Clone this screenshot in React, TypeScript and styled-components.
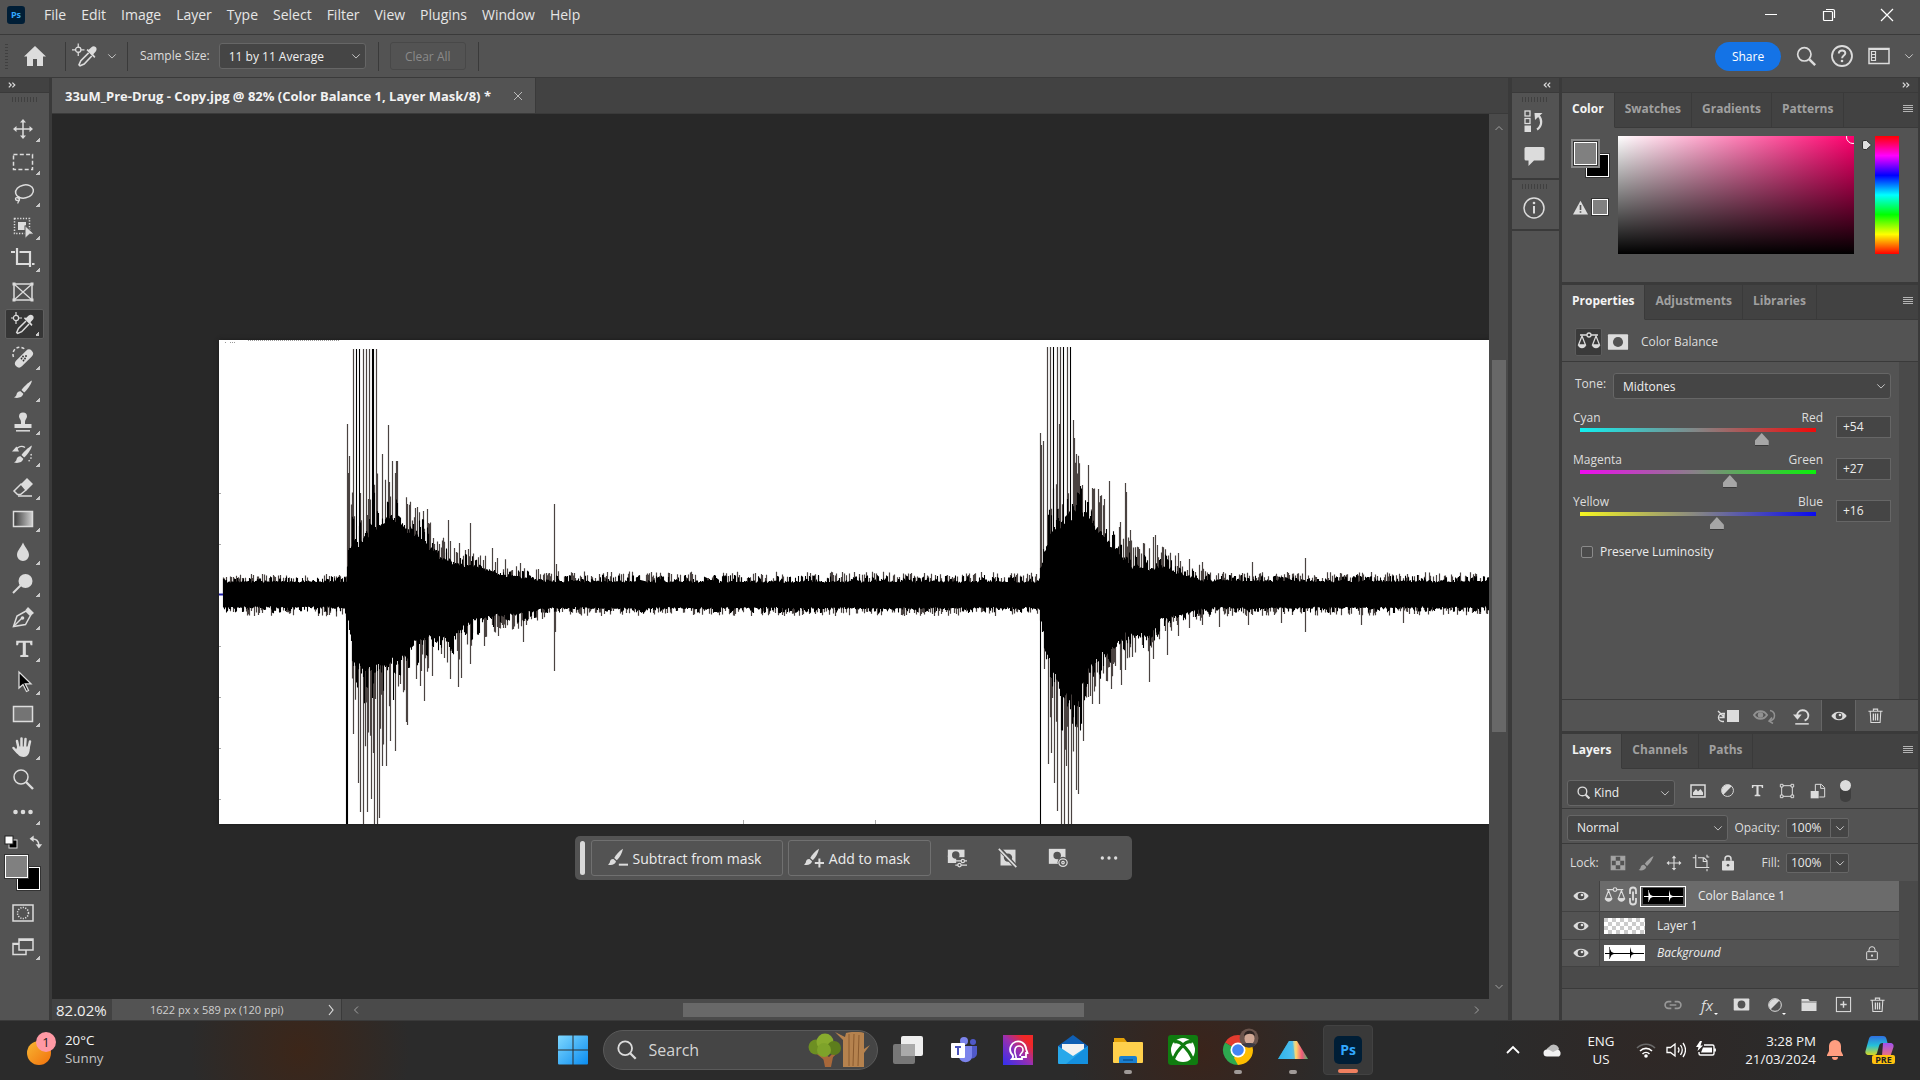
import React from 'react';
import styled, { createGlobalStyle, css } from 'styled-components';

const c = {
  bar: '#535353',
  line: '#3a3a3a',
  tabBar: '#424242',
  field: '#454545',
  fieldLine: '#666666',
  canvas: '#282828',
  icon: '#dcdcdc',
  text: '#dddddd',
  dim: '#a0a0a0',
};

const Global = createGlobalStyle`
  *, *::before, *::after { box-sizing: border-box; }
  body { margin: 0; background: ${c.canvas}; }
  body, button, input, select { font-family: "Open Sans", "Noto Sans", sans-serif; }
  button { background: none; border: 0; padding: 0; margin: 0; color: inherit; display: flex; align-items: center; justify-content: center; flex: none; }
  h1, h2, p, ul { margin: 0; padding: 0; font-weight: inherit; font-size: inherit; }
  ul { list-style: none; }
  svg { display: block; flex: none; }
`;

/* ---------- frame ---------- */

const Frame = styled.div`
  min-height: 100vh;
  display: flex;
  flex-direction: column;
  background: ${c.bar};
  color: ${c.text};
  font-size: 12px;
  line-height: 18px;
`;

const TitleBar = styled.header`
  display: flex;
  align-items: center;
  height: 35px;
  padding: 0 25px 5px 7px;
  border-bottom: 1px solid ${c.line};
`;

const Menu = styled.nav`
  display: flex;
  flex: 1;
  gap: 15px;
  margin-left: 19px;
`;

const MenuButton = styled.button`
  font-size: 14px;
  line-height: 20px;
  color: #e6e6e6;
`;

const WindowButton = styled.button`
  width: 16px;
  height: 20px;
  margin-left: 42px;
`;

const OptionsBar = styled.div`
  display: flex;
  align-items: center;
  height: 43px;
  padding: 0 6px 0 5px;
  border-bottom: 1px solid ${c.line};
`;

const Grip = styled.span<{ $wide?: boolean }>`
  display: block;
  ${(p) =>
    p.$wide
      ? css`
          width: 25px;
          height: 5px;
          background: repeating-linear-gradient(90deg, #404040 0 1px, transparent 1px 3px);
        `
      : css`
          width: 3px;
          height: 25px;
          background: repeating-linear-gradient(#404040 0 1px, transparent 1px 3px);
        `}
`;

const Divider = styled.span<{ $before: number; $after: number }>`
  width: 1px;
  height: 29px;
  background: ${c.line};
  margin: 0 ${(p) => p.$after}px 0 ${(p) => p.$before}px;
`;

const HomeButton = styled.button`
  width: 24px;
  height: 24px;
  margin-left: 15px;
`;

const ToolPreset = styled.button`
  gap: 9px;
`;

const SelectBox = styled.span<{ $width?: number; $grow?: boolean; $pad?: number }>`
  display: grid;
  align-items: center;
  height: 26px;
  ${(p) => (p.$grow ? 'flex: 1;' : `width: ${p.$width}px;`)}
  background: ${c.field};
  border: 1px solid ${c.fieldLine};
  border-radius: 3px;
  > * { grid-area: 1 / 1; }
  > svg { justify-self: end; margin-right: 4px; pointer-events: none; }
  > svg.lead { justify-self: start; margin-left: 9px; }
  select {
    appearance: none;
    width: 100%;
    height: 100%;
    padding: 0 18px 0 ${(p) => p.$pad ?? 9}px;
    border: 0;
    outline: 0;
    background: none;
    color: #f0f0f0;
    font-size: 12px;
  }
`;

const OptionLabel = styled.label`
  margin-right: 9px;
`;

const ClearAll = styled.button`
  width: 76px;
  height: 28px;
  border: 1px solid #484848;
  border-radius: 3px;
  color: #8a8a8a;
  font-size: 12px;
`;

const Spacer = styled.span`
  flex: 1;
`;

const Share = styled.button`
  width: 66px;
  height: 29px;
  border-radius: 15px;
  background: #1473e6;
  color: #fff;
  font-size: 12px;
`;

const TopActions = styled.div`
  display: flex;
  align-items: center;
  margin-left: 15px;
  gap: 14px;
`;

const Workspace = styled.div`
  flex: 1;
  display: flex;
  min-height: 0;
`;

/* ---------- tool column ---------- */

const Collapse = styled.div<{ $right?: boolean }>`
  display: flex;
  align-items: center;
  height: 15px;
  justify-content: ${(p) => (p.$right ? 'flex-end' : 'flex-start')};
  padding: 0 8px;
  background: ${c.tabBar};
  border-bottom: 1px solid ${c.line};
`;

const ToolColumn = styled.aside`
  width: 52px;
  border-right: 3px solid ${c.line};
  display: flex;
  flex-direction: column;
`;

const GripRow = styled.div<{ $height: number }>`
  height: ${(p) => p.$height}px;
  padding-top: 4px;
  display: flex;
  justify-content: center;
`;

const ToolList = styled.div`
  display: grid;
  grid-template-rows: repeat(11, 32px 33px);
  padding-left: 5px;
  align-items: center;
`;

const Tool = styled.button<{ $active?: boolean; $more?: boolean }>`
  width: 39px;
  height: 30px;
  padding-right: 3px;
  border-radius: 2px;
  ${(p) => p.$active && 'background: #363636; border: 1px solid #5f5f5f;'}
  ${(p) =>
    p.$more &&
    css`
      background-image: linear-gradient(135deg, transparent 50%, #c8c8c8 50%);
      background-size: 4px 4px;
      background-position: right 4px bottom 2px;
      background-repeat: no-repeat;
    `}
`;

const ColorChips = styled.div`
  padding: 2px 4px 0;
`;

const ChipTools = styled.div`
  display: flex;
  justify-content: space-between;
  padding-right: 2px;
  height: 24px;
  align-items: center;
`;

const Swatches = styled.div`
  position: relative;
  height: 36px;
  width: 36px;
`;

const Swatch = styled.button<{ $fg?: boolean; $ring?: boolean }>`
  position: absolute;
  width: 23px;
  height: 23px;
  border: 1px solid #fff;
  background: #000;
  right: 0;
  bottom: 0;
  box-shadow: 0 0 0 1px #333;
  ${(p) =>
    p.$fg &&
    css`
      left: 1px;
      top: 1px;
      background: #808080;
      box-shadow: 0 0 0 1px #333${p.$ring ? ', 0 0 0 3px #888' : ''};
    `}
`;

const ModeList = styled.div`
  display: flex;
  flex-direction: column;
  gap: 4px;
  padding: 8px 0 0 5px;
`;

/* ---------- document ---------- */

const Document = styled.main`
  flex: 1;
  min-width: 0;
  display: flex;
  flex-direction: column;
  background: ${c.canvas};
`;

const DocTabs = styled.div`
  display: flex;
  height: 36px;
  background: ${c.tabBar};
  border-bottom: 1px solid ${c.line};
`;

const DocTab = styled.div`
  display: flex;
  align-items: center;
  gap: 23px;
  padding: 0 13px 0 13px;
  background: ${c.bar};
  border-right: 1px solid ${c.line};
  font-size: 13px;
  font-weight: 700;
  color: #f2f2f2;
  white-space: nowrap;
`;

const DocBody = styled.div`
  flex: 1;
  display: grid;
  grid-template-columns: minmax(0, 1fr) 19px;
  grid-template-rows: minmax(0, 1fr) 21px;
  min-height: 0;
`;

const Stage = styled.section`
  position: relative;
  padding: 226px 0 40px 167px;
  overflow: hidden;
`;

const Artboard = styled.div`
  background: #fff;
  overflow: hidden;
  height: 484px;
  box-shadow: 0 0 4px #1a1a1a;
`;

const TaskBarFloat = styled.div`
  position: absolute;
  left: 523px;
  bottom: 119px;
  display: flex;
  align-items: center;
  height: 44px;
  width: 557px;
  padding: 0 5px;
  border-radius: 5px;
  background: ${c.bar};
`;

const Handle = styled.span`
  width: 5px;
  height: 34px;
  border-radius: 3px;
  background: #d8d8d8;
  margin-right: 6px;
`;

const MaskButton = styled.button<{ $width: number }>`
  width: ${(p) => p.$width}px;
  height: 36px;
  margin-right: 5px;
  padding-right: 5px;
  gap: 5px;
  border: 1px solid #707070;
  border-radius: 3px;
  color: #ececec;
  font-size: 14px;
`;

const MaskIcons = styled.div`
  flex: 1;
  display: flex;
  justify-content: space-between;
  padding: 0 8px 0 11px;
`;

const VScroll = styled.div`
  grid-row: 1 / 3;
  grid-column: 2;
  background: #4a4a4a;
  display: flex;
  flex-direction: column;
  align-items: center;
  padding: 10px 0 29px;
`;

const VThumb = styled.span`
  width: 14px;
  height: 372px;
  margin-top: 228px;
  margin-bottom: auto;
  background: #686868;
`;

const StatusBar = styled.div`
  display: flex;
  align-items: center;
  background: #4a4a4a;
  color: #d0d0d0;
`;

const Zoom = styled.input`
  width: 60px;
  height: 21px;
  padding: 0 4px;
  border: 0;
  background: ${c.tabBar};
  color: #f0f0f0;
  font-size: 15px;
`;

const DocInfo = styled.button`
  width: 230px;
  height: 21px;
  padding: 0 7px 0 38px;
  justify-content: space-between;
  background: ${c.bar};
  border-right: 1px solid ${c.line};
  font-size: 11px;
`;

const HTrack = styled.div`
  flex: 1;
  display: flex;
  align-items: center;
  padding: 0 8px 0 10px;
`;

const HThumb = styled.span`
  width: 401px;
  height: 14px;
  margin-left: 323px;
  margin-right: auto;
  background: #686868;
`;

/* ---------- dock ---------- */

const Strip = styled.aside`
  width: 53px;
  border-left: 4px solid ${c.line};
  border-right: 2px solid ${c.line};
`;

const StripGroup = styled.div`
  display: flex;
  flex-direction: column;
  align-items: center;
  padding-right: 3px;
  border-bottom: 2px solid ${c.line};
`;

const StripButton = styled.button`
  width: 40px;
  height: 35px;
`;

const StripGap = styled.div<{ $h: number }>`
  height: ${(p) => p.$h}px;
`;

const Dock = styled.aside`
  width: 359px;
  display: flex;
  flex-direction: column;
  border-left: 1px solid ${c.line};
  border-right: 2px solid ${c.line};
`;

const Panel = styled.section<{ $grow?: boolean }>`
  display: flex;
  flex-direction: column;
  ${(p) => p.$grow && 'flex: 1;'}
  & + & { border-top: 3px solid ${c.line}; }
`;

const TabRow = styled.div`
  display: flex;
  height: 35px;
  background: ${c.tabBar};
  align-items: stretch;
`;

const Tab = styled.button<{ $on?: boolean }>`
  padding: 0 10px 4px 10px;
  border-right: 1px solid ${c.line};
  border-bottom: 1px solid ${(p) => (p.$on ? c.bar : c.line)};
  background: ${(p) => (p.$on ? c.bar : 'transparent')};
  color: ${(p) => (p.$on ? '#f4f4f4' : c.dim)};
  font-size: 12px;
  font-weight: 700;
`;

const TabRest = styled.div`
  flex: 1;
  display: flex;
  align-items: center;
  justify-content: flex-end;
  padding: 0 5px 2px;
  border-bottom: 1px solid ${c.line};
`;

const ColorBody = styled.div`
  display: flex;
  height: 154px;
  padding: 8px 19px 0 11px;
`;

const ColorSide = styled.div`
  width: 45px;
  padding-top: 5px;
`;

const Gamut = styled.div`
  display: flex;
  align-items: center;
  gap: 4px;
  margin-top: 22px;
`;

const GamutChip = styled.button`
  width: 16px;
  height: 16px;
  border: 1px solid #fff;
  outline: 1px solid #333;
  background: #808080;
`;

const ColorField = styled.div`
  flex: 1;
  height: 118px;
  display: flex;
  justify-content: flex-end;
  overflow: hidden;
  background: linear-gradient(transparent, #000), linear-gradient(90deg, #fff, #ff006e);
`;

const FieldCursor = styled.span`
  width: 14px;
  height: 14px;
  margin: -6px -6px 0 0;
  border: 1px solid #fff;
  border-radius: 50%;
`;

const HuePointer = styled.span`
  width: 21px;
  padding: 3px 0 0 8px;
`;

const Hue = styled.div`
  width: 24px;
  height: 118px;
  background: linear-gradient(#f00, #f0f, #00f, #0ff, #0f0, #ff0, #f00);
`;

const AdjustHead = styled.div`
  display: flex;
  align-items: center;
  gap: 2px;
  height: 42px;
  padding: 3px 13px 0;
  border-bottom: 1px solid ${c.line};
`;

const SmallButton = styled.button<{ $on?: boolean }>`
  width: 27px;
  height: 28px;
  border-radius: 2px;
  ${(p) => p.$on && 'background: #3a3a3a; border: 1px solid #5c5c5c;'}
`;

const AdjustTitle = styled.h2`
  margin-left: 8px;
`;

const Scrollable = styled.div<{ $grow?: boolean }>`
  display: flex;
  ${(p) => p.$grow && 'flex: 1;'}
`;

const Gutter = styled.span`
  width: 19px;
  background: #4a4a4a;
`;

const AdjustBody = styled.div`
  flex: 1;
  padding: 11px 8px 0 11px;
`;

const ToneRow = styled.div`
  display: flex;
  gap: 5px;
  margin-bottom: 10px;
  label { width: 33px; margin: 2px 0 0 2px; }
`;

const BalanceRow = styled.div`
  display: flex;
  align-items: flex-start;
  justify-content: space-between;
  height: 42px;
`;

const BalanceMain = styled.label`
  flex: 1;
  margin-right: 13px;
`;

const Ends = styled.span`
  display: flex;
  justify-content: space-between;
`;

const Range = styled.input<{ $from: string; $to: string }>`
  display: block;
  appearance: none;
  width: 100%;
  height: 18px;
  margin: 1px 0 0;
  background: none;
  &::-webkit-slider-runnable-track {
    height: 18px;
    background: linear-gradient(90deg, ${(p) => p.$from}, #858585, ${(p) => p.$to}) center top / calc(100% - 14px) 4px no-repeat;
  }
  &::-webkit-slider-thumb {
    appearance: none;
    width: 14px;
    height: 13px;
    margin-top: 5px;
    background: linear-gradient(#3a3a3a, #3a3a3a) center bottom / 100% 1px no-repeat, #a6a6a6;
    clip-path: polygon(50% 0, 100% 60%, 100% 100%, 0 100%, 0 60%);
  }
`;

const Value = styled.input`
  width: 55px;
  height: 22px;
  margin-top: 7px;
  padding: 0 6px 1px;
  border: 1px solid ${c.fieldLine};
  background: ${c.field};
  color: #ececec;
  font-size: 12px;
`;

const CheckRow = styled.label`
  display: flex;
  align-items: center;
  gap: 7px;
  margin-top: 8px;
  padding-left: 8px;
  color: #ececec;
`;

const Check = styled.input`
  appearance: none;
  width: 12px;
  height: 12px;
  margin: 0;
  border: 1px solid #8a8a8a;
  border-radius: 2px;
  background: #4b4b4b;
`;

const Footer = styled.div<{ $gap: number; $end: number }>`
  display: flex;
  align-items: center;
  justify-content: flex-end;
  gap: ${(p) => p.$gap}px;
  height: 32px;
  padding-right: ${(p) => p.$end}px;
  border-top: 1px solid ${c.line};
`;

const FooterButton = styled.button<{ $on?: boolean }>`
  width: 35px;
  height: 31px;
  ${(p) => p.$on && `background: ${c.tabBar}; border: solid #666; border-width: 0 1px;`}
`;

const LayerAction = styled.button<{ $fx?: boolean; $more?: boolean }>`
  position: relative;
  width: 20px;
  height: 20px;
  color: ${c.icon};
  ${(p) => p.$fx && 'font-style: italic; font-size: 15px;'}
  ${(p) =>
    p.$more &&
    css`
      &::after {
        content: "";
        position: absolute;
        right: -1px;
        bottom: 0;
        border: 2px solid transparent;
        border-top-color: #fff;
        border-bottom: 0;
      }
    `}
`;

const LayerBar = styled.div<{ $height: number; $top: number; $last?: boolean }>`
  display: flex;
  align-items: center;
  height: ${(p) => p.$height}px;
  padding: ${(p) => p.$top}px 8px 0 5px;
  border-bottom: ${(p) => (p.$last ? 0 : 1)}px solid ${c.line};
`;

const LayerLead = styled.div`
  display: flex;
  align-items: center;
  width: 219px;
`;

const Filters = styled.div`
  display: flex;
  width: 161px;
  justify-content: space-between;
  align-items: center;
  margin: -4px 0 0 15px;
`;

const Switch = styled.button`
  width: 11px;
  height: 22px;
  border-radius: 5px;
  background: #3f3f3f;
  align-items: flex-start;
  &::before { content: ""; width: 11px; height: 11px; border-radius: 50%; background: #dcdcdc; }
`;

const FieldLabel = styled.label`
  margin-left: auto;
  padding-right: 6px;
`;

const Percent = styled.span`
  display: flex;
  width: 63px;
  height: 20px;
  border: 1px solid ${c.fieldLine};
  border-radius: 2px;
  background: ${c.field};
  input {
    width: 44px;
    padding: 0 0 1px 4px;
    border: 0;
    border-right: 1px solid ${c.fieldLine};
    background: none;
    color: #e8e8e8;
    font-size: 12px;
  }
  button { flex: 1; }
`;

const LockGroup = styled.div`
  display: flex;
  align-items: center;
  gap: 9px;
  padding-left: 3px;
  span { width: 30px; }
`;

const LayerList = styled.ul`
  flex: 1;
  background: #4a4a4a;
`;

const LayerRow = styled.li<{ $height: number }>`
  display: flex;
  height: ${(p) => p.$height}px;
  background: ${c.bar};
  border-bottom: 1px solid #424242;
`;

const EyeCell = styled.button`
  width: 38px;
  border-right: 1px solid #424242;
`;

const LayerCell = styled.div<{ $on?: boolean; $italic?: boolean }>`
  flex: 1;
  display: flex;
  align-items: center;
  padding: 0 19px 0 4px;
  background: ${(p) => (p.$on ? '#6b6b6b' : 'transparent')};
  ${(p) => p.$italic && 'font-style: italic;'}
  color: #ececec;
`;

const LayerName = styled.span`
  flex: 1;
  padding-left: 12px;
`;

/* ---------- desktop bar ---------- */

const Desktop = styled.footer`
  display: grid;
  grid-template-columns: 1fr auto 1fr;
  height: 60px;
  border-top: 1px solid #3a3a3a;
  color: #f5f5f5;
  font-size: 14px;
  line-height: 20px;
  background:
    radial-gradient(ellipse 110px 120px at 300px 50%, #3c2619, transparent),
    radial-gradient(ellipse 130px 120px at 1200px 50%, #3a241b, transparent),
    radial-gradient(ellipse 160px 120px at 1650px 50%, #2f2826, transparent),
    #2b2b2b;
`;

const Weather = styled.button`
  justify-self: start;
  gap: 9px;
  padding: 0 0 3px 26px;
  text-align: left;
  p + p { color: #c4c4c4; }
`;

const Apps = styled.div`
  display: flex;
  align-items: center;
  gap: 5px;
  padding-bottom: 1px;
`;

const AppButton = styled.button<{ $active?: boolean; $dot?: boolean }>`
  position: relative;
  width: 50px;
  height: 50px;
  border-radius: 4px;
  ${(p) => p.$active && 'background: #393939; border: 1px solid #424242;'}
  &::after {
    content: "";
    position: absolute;
    bottom: 1px;
    height: 4px;
    border-radius: 2px;
    width: ${(p) => (p.$active ? 20 : p.$dot ? 8 : 0)}px;
    background: ${(p) => (p.$active ? '#f08060' : '#a09a98')};
  }
`;

const SearchBox = styled.label`
  display: flex;
  align-items: center;
  width: 275px;
  height: 40px;
  padding: 0 6px 0 12px;
  gap: 11px;
  border: 1px solid #5a5a5a;
  border-radius: 20px;
  background: #454545;
  input {
    flex: 1;
    min-width: 0;
    border: 0;
    padding: 0;
    background: none;
    font-size: 16px;
    &::placeholder { color: #d4d4d4; opacity: 1; }
  }
`;

const Tray = styled.div`
  justify-self: end;
  display: flex;
  padding: 0 10px 2px 0;
`;

const TrayButton = styled.button<{ $width: number; $stack?: boolean; $right?: boolean }>`
  width: ${(p) => p.$width}px;
  gap: 10px;
  ${(p) => p.$stack && 'flex-direction: column; gap: 0;'}
  ${(p) => p.$right && 'align-items: flex-end; padding-right: 4px;'}
`;

/* ---------- icons ---------- */

type IcoProps = { s?: number; w?: number; h?: number; vb?: string; o?: number; cls?: string; children: React.ReactNode };
const Ico = ({ s = 24, w, h, vb = '0 0 24 24', o = 1, cls, children }: IcoProps) => (
  <svg width={w ?? s} height={h ?? s} viewBox={vb} className={cls} opacity={o} fill="none" stroke={c.icon} strokeWidth={1.5} aria-hidden="true">
    {children}
  </svg>
);

const Chevron = ({ s = 12, cls }: { s?: number; cls?: string }) => (
  <Ico s={s} vb="0 0 12 12" cls={cls}><path d="M1.500 4l4.500 4.500L10.500 4" strokeWidth="1.200" stroke="#c4c4c4" /></Ico>
);
const Twin = ({ left }: { left?: boolean }) => (
  <Ico w={8} h={6} vb="0 0 10 7"><path d={left ? 'M4.500 .5l-3 3 3 3M9 .5l-3 3 3 3' : 'M1 .5l3 3-3 3M5.500 .5l3 3-3 3'} strokeWidth="1.500" /></Ico>
);
const Hamburger = () => (
  <Ico w={10} h={8} vb="0 0 10 8"><path d="M0 .5h10M0 2.500h10M0 4.500h10M0 6.500h10" strokeWidth="1" stroke="#b4b4b4" /></Ico>
);
const Ps = ({ s }: { s: number }) => (
  <svg width={s} height={s} viewBox="0 0 28 28" aria-hidden="true">
    <rect width="28" height="28" rx="5" fill="#001e36" />
    <text x="14" y="19" textAnchor="middle" fontFamily="Open Sans, sans-serif" fontWeight="700" fontSize="14" fill="#31a8ff">Ps</text>
  </svg>
);

const moveP = (
  <>
    <path d="M12 4v16M4 12h16" />
    <path d="M12 2l3 3.500H9zM12 22l3-3.500H9zM2 12l3.500-3v6zM22 12l-3.500-3v6z" fill={c.icon} stroke="none" />
  </>
);
const brushP = (
  <>
    <path d="M21 3.500C17 5.500 12.500 10 10.500 13l2.700 2.600C16 13 20 8 21 3.500z" fill={c.icon} stroke="none" />
    <path d="M9.600 14.200c-2.300-.2-3.600 1.200-4 3-.2 1.500-.9 2.300-2.600 3.300 3.700 1 8.500.2 9.300-3.700z" fill={c.icon} stroke="none" />
  </>
);
const maskBrushP = (
  <>
    <path d="M18 1C13 4 9.500 8.500 7.500 12l3 2.800C14 11.500 17 6.500 18 1z" fill={c.icon} stroke="none" />
    <path d="M6.500 13.300c-2.500-.2-3.800 1.300-4.200 3.200-.2 1.600-1 2.400-2.300 3.500 4 1 8.800.2 9.600-4z" fill={c.icon} stroke="none" />
  </>
);
const dropperP = (
  <>
    <path d="M15 9l-7.500 7.500-1.800 4 1 .9 4-1.700L18 12" />
    <path d="M13 6.500l7.500 7.500 1-1.200-2-2.600 2.500-2.800c1-1.500.8-3-.3-4-1.100-1-2.700-1-4 .1L15 6l-1.200-.8z" fill={c.icon} stroke="none" />
    <circle cx="5" cy="6" r="2.600" strokeWidth="1.200" />
    <path d="M5 0v4M5 8v4M-1 6h4M7 6h4" strokeWidth="1.200" />
  </>
);
const trashP = (
  <>
    <path d="M2 6h20M9 6V3h6v3M4.500 6l1 16h13l1-16" />
    <path d="M9 9v10M12 9v10M15 9v10" strokeWidth="1.800" />
  </>
);
const eyeP = (
  <>
    <path d="M.5 12C5 3.500 19 3.500 23.500 12 19 20.500 5 20.500.5 12z" fill={c.icon} stroke="none" />
    <circle cx="12" cy="12" r="5" fill="#4a4a4a" stroke="none" />
    <circle cx="13.500" cy="10.500" r="2" fill={c.icon} stroke="none" />
  </>
);
const scalesP = (
  <>
    <path d="M3 5h7M14 5h7" />
    <circle cx="12" cy="5" r="2" strokeWidth="1.300" />
    <path d="M5 6L1.500 15h7zM19 6l-3.500 9h7z" strokeWidth="1.200" />
    <path d="M1 14.500h8c0 5-8 5-8 0zM15 14.500h8c0 5-8 5-8 0z" fill={c.icon} stroke="none" />
  </>
);
const maskP = (
  <>
    <rect x="1" y="3.500" width="22" height="17" rx="1" fill={c.icon} stroke="none" />
    <circle cx="12" cy="12" r="5.500" fill={c.bar} stroke="none" />
  </>
);
const halfP = (
  <>
    <circle cx="12" cy="12" r="9.500" />
    <path d="M18.700 5.300A9.500 9.500 0 0 0 5.300 18.700z" fill={c.icon} stroke="none" />
  </>
);
const typeP = <path d="M3 3h18v5h-2l-.8-2.800h-4.500v13.300l2.800.8V21h-9v-1.700l2.800-.8V5.200H5.800L5 8H3z" fill={c.icon} stroke="none" />;
const lensP = (
  <>
    <circle cx="10" cy="10" r="7" />
    <path d="M15 15l7 7" strokeWidth="2.400" />
  </>
);
const lockP = (
  <>
    <rect x="4" y="10" width="16" height="12" rx="1" />
    <path d="M7.500 10V7a4.500 4.500 0 0 1 9 0v3" />
    <circle cx="12" cy="16" r="1.600" fill={c.icon} stroke="none" />
  </>
);
const linkP = <path d="M10 8H6.500a4 4 0 0 0 0 8H10M14 8h3.500a4 4 0 0 1 0 8H14M8 12h8" strokeWidth="2" />;
const swapP = (
  <>
    <path d="M5 7c7-1 12 3 12 11" strokeWidth="2.600" />
    <path d="M8 1v11L1 6.500zM11.500 16h11L17 23z" fill={c.icon} stroke="none" />
  </>
);

const tools: { name: string; art: React.ReactNode; more?: boolean; active?: boolean }[] = [
  { name: 'Move', more: true, art: moveP },
  { name: 'Rectangular marquee', more: true, art: <rect x="2.500" y="4.500" width="19" height="15" strokeDasharray="4 2.300" /> },
  { name: 'Lasso', more: true, art: <><ellipse cx="13.500" cy="9.500" rx="9" ry="6.500" transform="rotate(-12 13.500 9.500)" /><path d="M6.500 14.500a2 2 0 1 1-2 2c0-1.300 4-1 4 1 0 2-2 2-1.500 4" strokeWidth="1.300" /></> },
  { name: 'Object selection', more: true, art: <><rect x="3.500" y="3.500" width="15" height="15" strokeDasharray="1.300 1.500" /><rect x="7" y="7" width="8" height="8" fill={c.icon} stroke="none" /><path d="M14 10.500l9 8.500-4.500.3L14 23.500z" fill={c.icon} stroke={c.bar} strokeWidth="1" /></> },
  { name: 'Crop', more: true, art: <path d="M6 1v16h13M0 5h4M8.500 5H19v15M21 17h2.500" strokeWidth="2.200" /> },
  { name: 'Frame', art: <><rect x="3" y="4" width="18" height="16" /><path d="M3 4l18 16M21 4L3 20" strokeWidth="1.300" /><path d="M1.500 2.500h3v3h-3zM19.500 2.500h3v3h-3zM1.500 18.500h3v3h-3zM19.500 18.500h3v3h-3z" fill={c.icon} stroke="none" /></> },
  { name: 'Eyedropper', more: true, active: true, art: dropperP },
  { name: 'Healing brush', more: true, art: <><path d="M2.500 12a7 7 0 0 1 12-7" strokeDasharray="3 2" /><rect x="2" y="9.500" width="22" height="8" rx="4" transform="rotate(-45 13 13.500)" fill={c.icon} stroke="none" /><path d="M12 11.500l.01.01M14 13.500l.01.01M10.500 13.500l.01.01M12.500 15.500l.01.01M15 11l.01.01" stroke="#333" strokeWidth="1.800" strokeLinecap="round" /></> },
  { name: 'Brush', more: true, art: brushP },
  { name: 'Clone stamp', more: true, art: <><path d="M12 2.500a4 4 0 0 1 4 4c0 2-2 3-2 5.500V14h6.500v4H3.500v-4H10v-2c0-2.500-2-3.500-2-5.500a4 4 0 0 1 4-4z" fill={c.icon} stroke="none" /><path d="M5 20.800h14" /></> },
  { name: 'History brush', more: true, art: <>{brushP}<path d="M4 8.500c3-4 7-5 10-3" /><path d="M1 9.500l4.500-5 2.500 5z" fill={c.icon} stroke="none" /><path d="M20 12c1 4-1 7-4 8" strokeDasharray="1.500 1.800" /></> },
  { name: 'Eraser', more: true, art: <><path d="M10 9l6-6 6 6-6.500 6.500z" fill={c.icon} stroke="none" /><path d="M15 15l-5.500 4.500H6.500L3 16l7-7z" /><path d="M7 21h14" /></> },
  { name: 'Gradient', more: true, art: <><defs><linearGradient id="ramp"><stop offset="0" stopColor="#3a3a3a" /><stop offset="1" stopColor="#d0d0d0" /></linearGradient></defs><rect x="2.500" y="4.500" width="19" height="15" fill="url(#ramp)" /></> },
  { name: 'Blur', more: true, art: <path d="M12 2.500c2 5 6 8 6 12.500a6 6 0 0 1-12 0C6 10.500 10 7.500 12 2.500z" fill={c.icon} stroke="none" /> },
  { name: 'Dodge', more: true, art: <><circle cx="14.500" cy="9" r="7" fill={c.icon} stroke="none" /><path d="M10 13l-8 8" strokeWidth="2" /></> },
  { name: 'Pen', more: true, art: <><path d="M2.500 21.500L6 11l9-5 4.500 4.500-5 9z" /><path d="M3 21l8-8" /><circle cx="11.500" cy="13" r="1.800" fill={c.icon} stroke="none" /><path d="M14.500 5l2.500-3 6 6-3 2.500z" fill={c.icon} stroke="none" /></> },
  { name: 'Type', more: true, art: <g transform="translate(2.500 1) scale(.9)">{typeP}</g> },
  { name: 'Path selection', more: true, art: <path d="M8 2v16l4-3.500 3.500 7 2-1-3.300-6.700H20z" fill="#000" strokeWidth="1.300" /> },
  { name: 'Rectangle', more: true, art: <rect x="2.500" y="4.500" width="19" height="15" fill="#747474" /> },
  { name: 'Hand', more: true, art: <><path d="M7.500 13L6 6M10.500 12V3.500M14 12l.5-8M17.500 13l1.500-6.500M6.500 17.500l-4-4.500" strokeWidth="2.500" strokeLinecap="round" /><path d="M6.300 11.500h12.500c.3 6-1.500 10.500-6.300 10.500-4 0-6-3-8-6z" fill={c.icon} stroke="none" /></> },
  { name: 'Zoom', art: lensP },
  { name: 'Edit toolbar', more: true, art: <path d="M4.500 12h.01M12 12h.01M19.500 12h.01" strokeWidth="4.600" strokeLinecap="round" /> },
];

/* ---------- recorded trace ---------- */

type Pt = [number, number];
const WIDTH = 1330;
const MID = 254;

const upFloor: Pt[] = [[0, 12], [127, 12], [129, 40], [133, 46], [144, 52], [158, 66], [168, 74], [181, 68], [194, 62], [208, 46], [221, 34], [234, 30], [248, 28], [264, 25], [281, 19], [314, 14], [340, 12], [820, 12], [824, 30], [831, 60], [848, 76], [861, 84], [874, 68], [888, 52], [898, 42], [914, 26], [931, 24], [948, 26], [964, 18], [981, 13], [1330, 12]];
const upPeak: Pt[] = [[0, 20], [127, 21], [129, 110], [142, 95], [149, 125], [163, 140], [178, 120], [188, 95], [208, 85], [215, 58], [229, 56], [251, 48], [272, 40], [301, 30], [330, 23], [820, 22], [823, 100], [848, 120], [858, 150], [866, 115], [885, 100], [896, 70], [910, 62], [924, 52], [936, 52], [959, 38], [983, 28], [1000, 22], [1330, 22]];
const downFloor: Pt[] = [[0, 13], [127, 13], [129, 25], [133, 55], [138, 69], [168, 68], [181, 64], [194, 50], [208, 42], [234, 42], [248, 28], [264, 22], [300, 19], [330, 14], [820, 14], [823, 35], [836, 84], [848, 100], [858, 115], [864, 84], [881, 62], [894, 52], [908, 38], [931, 44], [941, 24], [968, 19], [981, 14], [1330, 13]];
const downPeak: Pt[] = [[0, 22], [127, 23], [130, 70], [138, 130], [150, 170], [160, 160], [176, 125], [188, 95], [205, 80], [234, 74], [248, 62], [264, 44], [285, 40], [304, 34], [330, 22], [820, 22], [824, 60], [833, 150], [850, 180], [862, 160], [868, 105], [890, 92], [910, 64], [934, 58], [950, 38], [980, 27], [1010, 22], [1330, 21]];

const upSpikes: Pt[] = [[128, 170], [129, 121], [130, 138], [141, 101], [150, 133], [157, 120], [163, 140], [169, 169], [173, 133], [177, 133], [178, 133], [187, 95], [198, 87], [208, 85], [229, 74], [240, 51], [251, 71], [273, 46], [301, 31], [335, 90], [337, 30], [821, 161], [822, 149], [824, 153], [840, 170], [854, 174], [855, 156], [857, 140], [860, 112], [863, 109], [869, 129], [874, 105], [879, 105], [885, 95], [890, 113], [901, 72], [906, 111], [907, 102], [911, 64], [924, 51], [934, 57], [936, 59], [946, 44], [959, 41], [970, 35], [983, 32], [1033, 32], [1086, 36]];
const downSpikes: Pt[] = [[134, 140], [139, 189], [141, 218], [144, 230], [148, 218], [152, 205], [155, 230], [158, 230], [160, 224], [163, 172], [167, 172], [171, 147], [176, 157], [181, 90], [187, 128], [188, 131], [197, 85], [201, 92], [205, 107], [213, 82], [231, 85], [239, 93], [242, 84], [251, 70], [265, 52], [279, 42], [304, 48], [335, 77], [336, 38], [825, 75], [829, 170], [832, 159], [835, 189], [838, 217], [842, 230], [845, 230], [849, 230], [852, 230], [857, 196], [859, 200], [864, 147], [869, 103], [873, 110], [880, 110], [887, 87], [892, 95], [902, 91], [906, 76], [930, 88], [934, 65], [948, 61], [959, 42], [970, 34], [983, 31], [1000, 33], [1029, 31], [1062, 29], [1086, 38], [1142, 31], [1184, 29]];
const bars: [number, number, boolean][] = [[134, 9, false], [137, 9, true], [140, 9, true], [144, 9, false], [147, 9, false], [150, 9, false], [153, 9, true], [154, 9, true], [157, 9, false], [828, 7, false], [831, 7, false], [834, 7, true], [838, 7, false], [841, 7, false], [844, 7, true], [848, 7, false], [851, 7, true]];

const level = (pts: Pt[], x: number) => {
  const i = Math.max(1, pts.findIndex((p) => p[0] >= x));
  const [x0, y0] = pts[i - 1];
  const [x1, y1] = pts[i];
  return y0 + ((y1 - y0) * (x - x0)) / (x1 - x0);
};

function buildTrace() {
  let seed = 77123;
  const rnd = () => {
    seed = (seed * 1664525 + 1013904223) % 4294967296;
    return seed / 4294967296;
  };
  let solid = '';
  let soft = '';
  const run = (floor: Pt[], peak: Pt[], dir: number) => {
    let lift = 0;
    let left = 0;
    for (let x = 4; x < WIDTH; x++) {
      const lo = level(floor, x);
      const hi = level(peak, x);
      if (left-- <= 0) {
        lift = rnd() < 0.5 ? rnd() * 0.65 : rnd() * 0.15;
        left = rnd() < 0.5 ? 0 : 1;
      }
      const body = lo * (0.92 + rnd() * 0.12) + lift * (hi - lo);
      solid += `M${x + 0.5} ${MID}v${(dir * body).toFixed(1)}`;
      if (rnd() < 0.35) {
        const tip = lo + (0.35 + 0.65 * rnd()) * (hi - lo);
        soft += `M${x + 0.5} ${MID}v${(dir * tip).toFixed(1)}`;
      }
    }
  };
  run(upFloor, upPeak, -1);
  run(downFloor, downPeak, 1);
  upSpikes.forEach(([x, h]) => { soft += `M${x + 0.5} ${MID}v${-h}`; });
  downSpikes.forEach(([x, h]) => { soft += `M${x + 0.5} ${MID}v${h}`; });
  [127, 128, 821].forEach((x) => { solid += `M${x + 0.5} ${MID}V484`; });
  bars.forEach(([x, y, dark]) => {
    const d = `M${x + 0.5} ${MID}V${y}`;
    if (dark) solid += d;
    else soft += d;
  });
  return { solid, soft };
}

const trace = buildTrace();

const Trace = () => (
  <svg width={WIDTH} height="484" viewBox={`0 0 ${WIDTH} 484`} fill="none" role="img" aria-label="Recorded signal">
    <path d={trace.soft} stroke="#4a4341" strokeWidth="1.200" />
    <path d={trace.solid} stroke="#000" strokeWidth="1.100" />
    <path d="M0 254.500h4" stroke="#2222aa" strokeWidth="2" />
    <path d="M0 153.500h2M0 204.500h2M0 306.500h2M0 357.500h2M0 408.500h2M0 459.500h2M524.500 480v4M656.500 480v4" stroke="#aaa" />
    <path d="M6 2.500h2M11 2.500h5M29 .5h92" stroke="#999" strokeDasharray="1 1" />
  </svg>
);

const Thumb = ({ dark }: { dark?: boolean }) => {
  const ink = dark ? '#fff' : '#000';
  return (
    <svg width={dark ? 46 : 41} height={dark ? 21 : 16} viewBox={dark ? '0 0 46 21' : '0 0 41 16'} aria-hidden="true">
      {dark && <rect x=".5" y=".5" width="45" height="20" fill="#555" stroke="#fff" />}
      <g transform={dark ? 'translate(3 2)' : 'translate(0 0)'}>
        <rect width={dark ? 40 : 41} height="16" fill={dark ? '#000' : '#fff'} />
        <path d="M1 8.500h39" stroke={ink} />
        <path d="M5.500 2v12" stroke={ink} strokeWidth="1" opacity=".6" />
        <path d="M6 4v9l1.500-3L11 8.500 7.500 7zM26 2v12l1.500-4L31 8.500 27.500 7z" fill={ink} />
      </g>
    </svg>
  );
};

const CheckerThumb = () => (
  <svg width="41" height="16" aria-hidden="true">
    <defs>
      <pattern id="checker" width="8" height="8" patternUnits="userSpaceOnUse">
        <rect width="8" height="8" fill="#fff" />
        <path d="M0 0h4v4H0zM4 4h4v4H4z" fill="#ccc" />
      </pattern>
    </defs>
    <rect width="41" height="16" fill="url(#checker)" />
  </svg>
);

/* ---------- app icons ---------- */

const appArt: { name: string; dot?: boolean; art: React.ReactNode }[] = [
  { name: 'Task view', art: <><rect x="0" y="9" width="22" height="20" rx="2" fill="#777" /><rect x="8" y="1" width="22" height="20" rx="2" fill="#eee" /><rect x="8" y="9" width="14" height="12" fill="#aaa" /></> },
  { name: 'Teams', art: <><circle cx="16" cy="6" r="4" fill="#7b83eb" /><circle cx="25" cy="7" r="3" fill="#5059c9" /><path d="M19 11h10v8a5 5 0 0 1-7 4z" fill="#5059c9" /><path d="M10 11h14v10c0 8-12 8-13 1z" fill="#7b83eb" /><rect x="3" y="8" width="14" height="15" rx="1" fill="#fff" /><path d="M7 12h6M10 12v8" stroke="#4b53bc" strokeWidth="2" /></> },
  { name: 'Mind notes', art: <><defs><linearGradient id="mind" x1="0" x2="1" y1="1" y2="0"><stop offset="0" stopColor="#3030f0" /><stop offset=".5" stopColor="#9a2fb0" /><stop offset=".8" stopColor="#f02828" /></linearGradient></defs><rect width="30" height="30" fill="url(#mind)" /><path d="M9 24c2-2 1-4-1-6a8 8 0 1 1 15-5c0 2 1 3 1.500 5H23v4h-4v2z" fill="none" stroke="#fff" strokeWidth="1.800" /><path d="M13 24c1-3-2-5-1-9a4 4 0 0 1 8 0c0 3-3 3-3 6" fill="none" stroke="#fff" strokeWidth="1.600" /></> },
  { name: 'Mail', art: <><path d="M0 11L15 0l15 11v5H0z" fill="#0f5fb4" /><path d="M4 9h22v12H4z" fill="#f2f2f2" /><path d="M0 11l15 10 15-10v17a1 1 0 0 1-1 1H1a1 1 0 0 1-1-1z" fill="#28a8ea" /><path d="M30 11L8 29h21a1 1 0 0 0 1-1z" fill="#1490df" /></> },
  { name: 'File Explorer', dot: true, art: <><path d="M1 3h10l3 4h-13z" fill="#e3a008" /><path d="M0 7h29a1 1 0 0 1 1 1v19a1 1 0 0 1-1 1H1a1 1 0 0 1-1-1z" fill="#ffd04c" /><path d="M6 28v-5a2 2 0 0 1 2-2h14a2 2 0 0 1 2 2v5z" fill="#1a7fd0" /><path d="M10 25h10" stroke="#0b5596" strokeWidth="1.500" /></> },
  { name: 'Xbox', art: <><rect width="30" height="30" rx="3" fill="#107c10" /><circle cx="15" cy="15" r="12" fill="#fff" /><path d="M6 7c3-1 6 0 9 3 3-3 6-4 9-3M5.500 24C8 18 11 14 15 10.500 19 14 22 18 24.500 24" fill="none" stroke="#107c10" strokeWidth="3" /></> },
  { name: 'Chrome', dot: true, art: <><path d="M15 15L2 7.500A15 15 0 0 1 28 7.500z" fill="#e33b2e" /><path d="M15 15L2 7.500A15 15 0 0 0 15 30z" fill="#2da94f" /><path d="M15 15h15a15 15 0 0 1-15 15l-4-7zM15 8h13.200A15 15 0 0 1 30 15H15z" fill="#fdbd00" /><circle cx="15" cy="15" r="7.500" fill="#fff" /><circle cx="15" cy="15" r="5.800" fill="#4285f4" /><circle cx="26" cy="3" r="9.500" fill="#6a544c" /><ellipse cx="26.500" cy="3.500" rx="5" ry="6" fill="#d0a895" /><path d="M21 1c0-7 11-7 11 0-3-3-7-3-11 0z" fill="#2e2422" /><path d="M19 9.500c3-2 11-2 14 0a9.500 9.500 0 0 1-14 0z" fill="#3a3a44" /></> },
  { name: 'Prism', dot: true, art: <><defs><linearGradient id="prism"><stop offset="0" stopColor="#35b6e8" /><stop offset=".45" stopColor="#7ad0f5" /><stop offset=".6" stopColor="#ffd76a" /><stop offset=".8" stopColor="#f0567a" /><stop offset="1" stopColor="#48c06b" /></linearGradient></defs><path d="M11 6h8l11 18H0z" fill="url(#prism)" /><path d="M11 6h4l2 18H0z" fill="#2bb0ea" opacity=".6" /></> },
];

const Tree = () => (
  <svg width="64" height="36" viewBox="0 0 64 36" aria-hidden="true">
    <path d="M15 20l3 15h6l3-15-5 5z" fill="#a8683a" />
    <path d="M10 21l10 8 8-7" stroke="#a8683a" strokeWidth="2" fill="none" />
    <circle cx="9" cy="15" r="7.500" fill="#6d8f22" />
    <circle cx="18" cy="10" r="8.500" fill="#88ab2e" />
    <circle cx="27" cy="16" r="7" fill="#5d7d1c" />
    <circle cx="17" cy="18" r="7" fill="#7ea32a" />
    <path d="M28 0l8 8v27h21V21l6-8-6 4V1c-6-2-15-1-18 0l-1 4z" fill="#b5824e" />
    <path d="M42 2v32M47 2l-1 32M52 3l-1 31" stroke="#8a5a2e" strokeWidth="1" />
  </svg>
);

/* ---------- data ---------- */

const menus = ['File', 'Edit', 'Image', 'Layer', 'Type', 'Select', 'Filter', 'View', 'Plugins', 'Window', 'Help'];
const balances = [
  { low: 'Cyan', high: 'Red', from: '#10f0f0', to: '#f00a0a', value: 54 },
  { low: 'Magenta', high: 'Green', from: '#f00af0', to: '#0af00a', value: 27 },
  { low: 'Yellow', high: 'Blue', from: '#f5f520', to: '#0a0af0', value: 16 },
];

const PanelTabs = ({ names }: { names: string[] }) => (
  <TabRow role="tablist">
    {names.map((n, i) => <Tab key={n} role="tab" aria-selected={i === 0} $on={i === 0}>{n}</Tab>)}
    <TabRest><button aria-label="Panel menu"><Hamburger /></button></TabRest>
  </TabRow>
);

const PercentField = ({ id }: { id: string }) => (
  <Percent>
    <input id={id} defaultValue="100%" />
    <button aria-label="Open slider"><Chevron s={10} /></button>
  </Percent>
);

export default function App() {
  return (
    <>
      <Global />
      <Frame>
        <TitleBar>
          <Ps s={18} />
          <Menu>{menus.map((m) => <MenuButton key={m}>{m}</MenuButton>)}</Menu>
          <WindowButton aria-label="Minimize"><Ico s={14} vb="0 0 14 14"><path d="M1 6.500h12" stroke="#fff" strokeWidth="1" /></Ico></WindowButton>
          <WindowButton aria-label="Restore"><Ico s={14} vb="0 0 14 14"><path d="M1.500 3.500h8a1 1 0 0 1 1 1v8h-8a1 1 0 0 1-1-1zM4 1.500h7a1.500 1.500 0 0 1 1.500 1.500v7" stroke="#fff" strokeWidth="1.200" /></Ico></WindowButton>
          <WindowButton aria-label="Close"><Ico s={14} vb="0 0 14 14"><path d="M1 1l12 12M13 1L1 13" stroke="#fff" strokeWidth="1.200" /></Ico></WindowButton>
        </TitleBar>

        <OptionsBar>
          <Grip />
          <HomeButton aria-label="Home"><Ico><path d="M12 2L1 12.500h3V22h6v-7h4v7h6v-9.500h3z" fill={c.icon} stroke="none" /></Ico></HomeButton>
          <Divider $before={18} $after={6} />
          <ToolPreset aria-label="Tool preset"><Ico s={26} vb="-1 0 25 24">{dropperP}</Ico><Chevron s={10} /></ToolPreset>
          <Divider $before={10} $after={12} />
          <OptionLabel htmlFor="sample">Sample Size:</OptionLabel>
          <SelectBox $width={147}>
            <select id="sample"><option>11 by 11 Average</option></select>
            <Chevron s={10} />
          </SelectBox>
          <Divider $before={12} $after={11} />
          <ClearAll>Clear All</ClearAll>
          <Divider $before={12} $after={0} />
          <Spacer />
          <Share>Share</Share>
          <TopActions>
            <button aria-label="Search"><Ico s={20}><circle cx="10" cy="10" r="8" strokeWidth="2" /><path d="M16 16l7 7" strokeWidth="3" /></Ico></button>
            <button aria-label="Help"><Ico s={24}><circle cx="12" cy="12" r="10" strokeWidth="1.800" /><path d="M8.800 9.500c.2-4 6.500-4 6.500-.3 0 2.300-3.200 2.300-3.200 5" strokeWidth="2" /><circle cx="12" cy="17" r="1.300" fill={c.icon} stroke="none" /></Ico></button>
            <button aria-label="Workspace"><Ico w={22} h={18} vb="0 0 22 18"><rect x="1" y="1.500" width="20" height="15" /><path d="M1 2h20" strokeWidth="2" /><path d="M3.500 4.500h4v9h-4zM3.500 7.500h4M3.500 10.500h4" strokeWidth="1.200" /></Ico></button>
            <button aria-label="Workspace list"><Chevron s={10} /></button>
          </TopActions>
        </OptionsBar>

        <Workspace>
          <ToolColumn>
            <Collapse><Twin /></Collapse>
            <GripRow $height={20}><Grip $wide /></GripRow>
            <ToolList>
              {tools.map((t) => (
                <Tool key={t.name} aria-label={t.name} $active={t.active} $more={t.more}><Ico s={24}>{t.art}</Ico></Tool>
              ))}
            </ToolList>
            <ColorChips>
              <ChipTools>
                <button aria-label="Default colors"><Ico s={14} vb="0 0 14 14"><rect x="5" y="5" width="8" height="8" fill="#000" strokeWidth="1" /><rect x="1" y="1" width="8" height="8" fill="#fff" stroke="#222" strokeWidth="1" /></Ico></button>
                <button aria-label="Swap colors"><Ico s={14}>{swapP}</Ico></button>
              </ChipTools>
              <Swatches>
                <Swatch aria-label="Background color" />
                <Swatch aria-label="Foreground color" $fg />
              </Swatches>
            </ColorChips>
            <ModeList>
              <Tool aria-label="Quick mask"><Ico><rect x="2" y="4" width="20" height="16" /><circle cx="12" cy="12" r="5.500" strokeDasharray="1.200 1.300" /></Ico></Tool>
              <Tool aria-label="Screen mode" $more><Ico><path d="M7.500 8.500H2v11h13V15" /><rect x="8" y="4" width="14" height="11" /><path d="M8 5h14M2 9h6" strokeWidth="2" /></Ico></Tool>
            </ModeList>
          </ToolColumn>

          <Document>
            <DocTabs>
              <DocTab>
                <h1>33uM_Pre-Drug - Copy.jpg @ 82% (Color Balance 1, Layer Mask/8) *</h1>
                <button aria-label="Close tab"><Ico s={8} vb="0 0 8 8"><path d="M0 0l8 8M8 0L0 8" strokeWidth="1" stroke="#bbb" /></Ico></button>
              </DocTab>
            </DocTabs>
            <DocBody>
              <Stage>
                <Artboard><Trace /></Artboard>
                <TaskBarFloat>
                  <Handle />
                  <MaskButton $width={192}><Ico s={20}>{maskBrushP}<path d="M13 20h11" strokeWidth="2.400" /></Ico>Subtract from mask</MaskButton>
                  <MaskButton $width={143}><Ico s={20}>{maskBrushP}<path d="M13 18h11M18.500 12.500v11" strokeWidth="2.400" /></Ico>Add to mask</MaskButton>
                  <MaskIcons>
                    <button aria-label="Mask settings"><Ico s={20}><path d="M1 2h20v9H1z" fill={c.icon} stroke="none" /><path d="M1 9h10v9H1z" fill={c.icon} stroke="none" /><circle cx="10.500" cy="8.500" r="4.500" fill={c.bar} stroke="none" /><path d="M10 15.500h14M10 20.500h14" /><circle cx="19" cy="15.500" r="2" fill={c.bar} /><circle cx="15" cy="20.500" r="2" fill={c.bar} /></Ico></button>
                    <button aria-label="Disable mask"><Ico s={20}><rect x="3" y="2" width="18" height="19" fill={c.icon} stroke="none" /><circle cx="12" cy="11.500" r="5" fill={c.bar} stroke="none" /><path d="M2 1l20 22" stroke={c.bar} strokeWidth="5" /><path d="M1 1l21 22" strokeWidth="2" /></Ico></button>
                    <button aria-label="View mask"><Ico s={20}><path d="M1 1h20v18H1z" fill={c.icon} stroke="none" /><circle cx="11" cy="9" r="4.500" fill={c.bar} stroke="none" /><circle cx="18" cy="17" r="6.500" fill={c.bar} stroke="none" /><ellipse cx="18" cy="17.500" rx="5" ry="4.500" /><circle cx="18" cy="17.500" r="1.500" /></Ico></button>
                    <button aria-label="More options"><Ico s={20}><path d="M4 12h.01M12 12h.01M20 12h.01" strokeWidth="4" strokeLinecap="round" /></Ico></button>
                  </MaskIcons>
                </TaskBarFloat>
              </Stage>
              <VScroll>
                <Ico s={8} vb="0 0 8 8" o={0.6}><path d="M.5 6L4 2.500 7.500 6" strokeWidth="1" /></Ico>
                <VThumb />
                <Ico s={8} vb="0 0 8 8" o={0.6}><path d="M.5 2L4 5.500 7.500 2" strokeWidth="1" /></Ico>
              </VScroll>
              <StatusBar>
                <Zoom aria-label="Zoom" defaultValue="82.02%" />
                <DocInfo>1622 px x 589 px (120 ppi)<Ico w={6} h={12} vb="0 0 6 12"><path d="M1 1l4 5-4 5" strokeWidth="1.200" /></Ico></DocInfo>
                <HTrack>
                  <Ico s={8} vb="0 0 8 8" o={0.6}><path d="M6 .5L2.500 4 6 7.500" strokeWidth="1" /></Ico>
                  <HThumb />
                  <Ico s={8} vb="0 0 8 8" o={0.6}><path d="M2 .5L5.500 4 2 7.500" strokeWidth="1" /></Ico>
                </HTrack>
              </StatusBar>
            </DocBody>
          </Document>

          <Strip>
            <Collapse $right><Twin left /></Collapse>
            <StripGroup>
              <GripRow $height={10}><Grip $wide /></GripRow>
              <StripButton aria-label="History"><Ico s={24}><rect x="3" y="2" width="5" height="5" strokeWidth="1.300" /><rect x="3" y="9.500" width="5" height="5" strokeWidth="1.300" /><rect x="2.500" y="16.500" width="6.500" height="6.500" fill={c.icon} stroke="none" /><path d="M15 20.500c5-3 5.500-10 1.500-14" strokeWidth="2.200" /><path d="M12.500 4h8l-7.500 7z" fill={c.icon} stroke="none" /></Ico></StripButton>
              <StripButton aria-label="Comments"><Ico s={24}><path d="M4 3h17a1.500 1.500 0 0 1 1.500 1.500V15a1.500 1.500 0 0 1-1.500 1.500H12L6.500 22v-5.500H4A1.500 1.500 0 0 1 2.500 15V4.500A1.500 1.500 0 0 1 4 3z" fill={c.icon} stroke="none" /></Ico></StripButton>
              <StripGap $h={5} />
            </StripGroup>
            <StripGroup>
              <GripRow $height={10}><Grip $wide /></GripRow>
              <StripButton aria-label="Info"><Ico s={24}><circle cx="12" cy="12" r="10" /><path d="M12 10v7.500" strokeWidth="2" /><circle cx="12" cy="7" r="1.300" fill={c.icon} stroke="none" /></Ico></StripButton>
              <StripGap $h={4} />
            </StripGroup>
          </Strip>

          <Dock>
            <Collapse $right><Twin /></Collapse>
            <Panel>
              <PanelTabs names={['Color', 'Swatches', 'Gradients', 'Patterns']} />
              <ColorBody>
                <ColorSide>
                  <Swatches>
                    <Swatch aria-label="Background color" />
                    <Swatch aria-label="Foreground color" $fg $ring />
                  </Swatches>
                  <Gamut>
                    <Ico s={15}><path d="M12 1l12 22H0z" fill={c.icon} stroke="none" /><path d="M12 8v8M12 18v2.500" stroke={c.bar} strokeWidth="2.600" /></Ico>
                    <GamutChip aria-label="Nearest printable color" />
                  </Gamut>
                </ColorSide>
                <ColorField><FieldCursor /></ColorField>
                <HuePointer><Ico w={10} h={12} vb="0 0 10 12"><path d="M.5 3Q.5 1.500 2 1.500h2.500L9.500 6 4.500 10.500H2Q.5 10.500.5 9z" fill="#e0e0e0" stroke="#333" strokeWidth="1" /></Ico></HuePointer>
                <Hue />
              </ColorBody>
            </Panel>

            <Panel $grow>
              <PanelTabs names={['Properties', 'Adjustments', 'Libraries']} />
              <AdjustHead>
                <SmallButton aria-label="Adjustment" $on><Ico s={24}>{scalesP}</Ico></SmallButton>
                <SmallButton aria-label="Mask"><Ico s={22}>{maskP}</Ico></SmallButton>
                <AdjustTitle>Color Balance</AdjustTitle>
              </AdjustHead>
              <Scrollable $grow>
                <AdjustBody>
                  <ToneRow>
                    <label htmlFor="tone">Tone:</label>
                    <SelectBox $grow><select id="tone"><option>Midtones</option></select><Chevron s={10} /></SelectBox>
                  </ToneRow>
                  {balances.map((b) => (
                    <BalanceRow key={b.low}>
                      <BalanceMain>
                        <Ends><span>{b.low}</span><span>{b.high}</span></Ends>
                        <Range type="range" min={-100} max={100} defaultValue={b.value} $from={b.from} $to={b.to} />
                      </BalanceMain>
                      <Value aria-label={`${b.low} to ${b.high}`} defaultValue={`+${b.value}`} />
                    </BalanceRow>
                  ))}
                  <CheckRow><Check type="checkbox" />Preserve Luminosity</CheckRow>
                </AdjustBody>
                <Gutter />
              </Scrollable>
              <Footer $gap={2} $end={25}>
                <FooterButton aria-label="Clip to layer"><Ico w={24} h={16} vb="0 0 24 16"><rect x="11" y="2" width="12" height="12" fill={c.icon} stroke="none" /><path d="M9 5.500H6.500a2.500 2.500 0 0 0 0 8H8M2 3l6 6M8 5v4.500H3.500" strokeWidth="1.400" /></Ico></FooterButton>
                <FooterButton aria-label="View previous state"><Ico w={24} h={16} vb="0 0 24 16" o={0.45}><path d="M1 7c3-5 10-5 13 0-3 5-10 5-13 0z" strokeWidth="2" /><circle cx="7.500" cy="7" r="2" fill={c.icon} /><path d="M17 2.500c6 1 6 9 0 10.500M19 9.500l-3 3.500 4 2.500" /></Ico></FooterButton>
                <FooterButton aria-label="Reset"><Ico s={18}><path d="M3 22.500h18" strokeWidth="2" /><path d="M5.500 11a7.500 7 0 1 1 10 7" strokeWidth="2.600" /><path d="M0 10h11.500l-5.500 7z" fill={c.icon} stroke="none" /></Ico></FooterButton>
                <FooterButton aria-label="Toggle visibility" $on><Ico s={16}>{eyeP}</Ico></FooterButton>
                <FooterButton aria-label="Delete"><Ico s={17}>{trashP}</Ico></FooterButton>
              </Footer>
            </Panel>

            <Panel>
              <PanelTabs names={['Layers', 'Channels', 'Paths']} />
              <LayerBar $height={40} $top={8}>
                <SelectBox $width={108} $pad={26}>
                  <Ico s={13} cls="lead"><circle cx="10" cy="10" r="8" strokeWidth="2.500" /><path d="M16 16l7 7" strokeWidth="4" /></Ico>
                  <select aria-label="Filter kind"><option>Kind</option></select>
                  <Chevron s={10} />
                </SelectBox>
                <Filters>
                  <button aria-label="Pixel layers"><Ico w={16} h={14} vb="0 0 16 14"><rect x="1" y="1" width="14" height="12" /><path d="M3 11V8.500L6 5l2 2.500L10.500 5l2.500 3.500V11z" fill={c.icon} stroke="none" /></Ico></button>
                  <button aria-label="Adjustment layers"><Ico s={15}>{halfP}</Ico></button>
                  <button aria-label="Type layers"><Ico s={15}>{typeP}</Ico></button>
                  <button aria-label="Shape layers"><Ico s={16}><path d="M6 4h12M6 20h12M4 6v12M20 6v12" /><path d="M2 2h4v4H2zM18 2h4v4h-4zM2 18h4v4H2zM18 18h4v4h-4z" /></Ico></button>
                  <button aria-label="Smart objects"><Ico s={16}><path d="M8 12V2h9l5 5v14h-8" /><path d="M16 2v6h6" /><rect x="1" y="12" width="12" height="11" fill={c.icon} stroke="none" /></Ico></button>
                  <Switch aria-label="Filter on" />
                </Filters>
              </LayerBar>
              <LayerBar $height={35} $top={3}>
                <LayerLead>
                  <SelectBox $width={161}><select aria-label="Blend mode"><option>Normal</option></select><Chevron s={10} /></SelectBox>
                  <FieldLabel htmlFor="opacity">Opacity:</FieldLabel>
                </LayerLead>
                <PercentField id="opacity" />
              </LayerBar>
              <LayerBar $height={37} $top={0} $last>
                <LayerLead>
                  <LockGroup>
                    <span>Lock:</span>
                    <button aria-label="Lock transparency"><Ico s={18} o={0.6}><path d="M3 3h18v18H3z" /><path d="M3 3h6v6H3zM15 3h6v6h-6zM9 9h6v6H9zM3 15h6v6H3zM15 15h6v6h-6z" fill={c.icon} stroke="none" /></Ico></button>
                    <button aria-label="Lock pixels"><Ico s={20} o={0.55}>{brushP}</Ico></button>
                    <button aria-label="Lock position"><Ico s={18}>{moveP}</Ico></button>
                    <button aria-label="Lock artboard"><Ico s={18}><path d="M5 1v17h18M1 5h4M8 5h8l4 4v9M20 20v3M20 1v3h3" /><path d="M15 5v5h5" /></Ico></button>
                    <button aria-label="Lock all"><Ico s={18}><rect x="4" y="9" width="16" height="13" rx="1" fill={c.icon} stroke="none" /><path d="M8 9V6.500a4 4 0 0 1 8 0V9" strokeWidth="2" /><circle cx="12" cy="15" r="1.800" fill={c.bar} stroke="none" /></Ico></button>
                  </LockGroup>
                  <FieldLabel htmlFor="fill">Fill:</FieldLabel>
                </LayerLead>
                <PercentField id="fill" />
              </LayerBar>
              <Scrollable>
                <LayerList>
                  <LayerRow $height={31}>
                    <EyeCell aria-label="Visibility"><Ico s={16}>{eyeP}</Ico></EyeCell>
                    <LayerCell $on>
                      <Ico s={22}>{scalesP}</Ico>
                      <Ico w={14} h={20} vb="0 0 14 20"><path d="M4 8V4.500a3 3 0 0 1 6 0V8M4 12v3.500a3 3 0 0 0 6 0V12M7 5.500v9" strokeWidth="1.800" /></Ico>
                      <Thumb dark />
                      <LayerName>Color Balance 1</LayerName>
                    </LayerCell>
                  </LayerRow>
                  <LayerRow $height={28}>
                    <EyeCell aria-label="Visibility"><Ico s={16}>{eyeP}</Ico></EyeCell>
                    <LayerCell><CheckerThumb /><LayerName>Layer 1</LayerName></LayerCell>
                  </LayerRow>
                  <LayerRow $height={27}>
                    <EyeCell aria-label="Visibility"><Ico s={16}>{eyeP}</Ico></EyeCell>
                    <LayerCell $italic><Thumb /><LayerName>Background</LayerName><Ico s={16}>{lockP}</Ico></LayerCell>
                  </LayerRow>
                  <StripGap $h={21} />
                </LayerList>
                <Gutter />
              </Scrollable>
              <Footer $gap={14} $end={31}>
                <LayerAction aria-label="Link layers"><Ico s={20} o={0.5}>{linkP}</Ico></LayerAction>
                <LayerAction aria-label="Layer style" $fx $more>fx</LayerAction>
                <LayerAction aria-label="Add mask"><Ico s={17}>{maskP}</Ico></LayerAction>
                <LayerAction aria-label="New adjustment" $more><Ico s={16}>{halfP}</Ico></LayerAction>
                <LayerAction aria-label="New group"><Ico s={18}><path d="M2 4h9l2 2.500h9V20H2z" fill={c.icon} stroke="none" /><path d="M2 8h20" stroke={c.bar} strokeWidth="1" /></Ico></LayerAction>
                <LayerAction aria-label="New layer"><Ico s={17}><rect x="2" y="2" width="20" height="20" /><path d="M12 7.500v9M7.500 12h9" strokeWidth="2" /></Ico></LayerAction>
                <LayerAction aria-label="Delete layer"><Ico s={17}>{trashP}</Ico></LayerAction>
              </Footer>
            </Panel>
          </Dock>
        </Workspace>

        <Desktop>
          <Weather>
            <svg width="30" height="36" viewBox="0 0 30 36" aria-hidden="true">
              <defs><linearGradient id="sun" x1="0" x2="1" y1="0" y2="1"><stop offset="0" stopColor="#f7b733" /><stop offset="1" stopColor="#f2700c" /></linearGradient></defs>
              <circle cx="13" cy="22" r="12" fill="url(#sun)" />
              <circle cx="20" cy="11" r="10" fill="#ff99a4" />
              <text x="20" y="16" textAnchor="middle" fontSize="13" fontFamily="Open Sans, sans-serif" fill="#222">1</text>
            </svg>
            <div><p>20°C</p><p>Sunny</p></div>
          </Weather>
          <Apps>
            <AppButton aria-label="Start">
              <svg width="30" height="30" viewBox="0 0 30 30" aria-hidden="true">
                <defs><linearGradient id="win" x1="0" x2="1" y1="0" y2="1"><stop offset="0" stopColor="#7fd8ff" /><stop offset="1" stopColor="#0a8cf0" /></linearGradient></defs>
                <path d="M0 1.500A1 1 0 0 1 1 .5h13.500v14H0zM15.500.5H29a1 1 0 0 1 1 1v13H15.500zM0 15.500h14.500v14H1a1 1 0 0 1-1-1zM15.500 15.500H30v13a1 1 0 0 1-1 1H15.500z" fill="url(#win)" />
              </svg>
            </AppButton>
            <SearchBox>
              <Ico s={22}><circle cx="10" cy="10" r="7.500" strokeWidth="2" /><path d="M15.500 15.500l6 6" strokeWidth="2.500" /></Ico>
              <input placeholder="Search" aria-label="Search" />
              <Tree />
            </SearchBox>
            {appArt.map((a) => (
              <AppButton key={a.name} aria-label={a.name} $dot={a.dot}>
                <svg width="30" height="30" viewBox="0 0 30 30" overflow="visible" aria-hidden="true">{a.art}</svg>
              </AppButton>
            ))}
            <AppButton aria-label="Photoshop" $active><Ps s={28} /></AppButton>
          </Apps>
          <Tray>
            <TrayButton $width={40} aria-label="Hidden icons"><Ico s={14} vb="0 0 14 14"><path d="M1 10l6-6 6 6" strokeWidth="1.800" stroke="#fff" /></Ico></TrayButton>
            <TrayButton $width={40} aria-label="Cloud storage"><Ico w={20} h={14} vb="0 0 20 14"><path d="M3.500 9A4.500 4.500 0 0 1 6 4a5.500 5.500 0 0 1 10 2l-6 6z" fill="#bdbdbd" stroke="none" /><path d="M4 13.500a3.500 3.500 0 0 1 0-7c3 0 4 1.500 6 2.500l5-2.500a4 4 0 0 1 1 7z" fill="#f2f2f2" stroke="none" /></Ico></TrayButton>
            <TrayButton $width={56} $stack><span>ENG</span><span>US</span></TrayButton>
            <TrayButton $width={94} aria-label="Network, sound, battery">
              <Ico s={20} vb="0 0 20 20"><path d="M1 8c5-5 13-5 18 0" stroke="#6a6a6a" strokeWidth="1.600" /><path d="M4 11c3.500-3.500 8.500-3.500 12 0M6.500 14c2-2 5-2 7 0" stroke="#fff" strokeWidth="1.600" /><circle cx="10" cy="16" r="1.800" fill="#fff" stroke="none" /></Ico>
              <Ico s={20} vb="0 0 20 20"><path d="M1 7.500v5h3.500L9 16V4L4.500 7.500zM12 7.500q2 2.500 0 5M14.500 5q3.500 5 0 10M17 3q5 7 0 14" stroke="#fff" strokeWidth="1.300" /></Ico>
              <Ico s={20} vb="0 0 20 20"><path d="M8 5h8.500A1.500 1.500 0 0 1 18 6.500v7a1.500 1.500 0 0 1-1.500 1.500h-12A1.500 1.500 0 0 1 3 13.500V12" stroke="#fff" strokeWidth="1.400" /><path d="M19 8.500v3" stroke="#fff" strokeWidth="1.800" /><path d="M7 7.500h9v5H5zM4 1L0 7h2.500L1.500 11 7 5.500H4.500L6 1z" fill="#fff" stroke="none" /></Ico>
            </TrayButton>
            <TrayButton $width={97} $stack $right><span>3:28 PM</span><span>21/03/2024</span></TrayButton>
            <TrayButton $width={30} aria-label="Notifications"><Ico w={18} h={20} vb="0 0 18 20"><path d="M9 0a6 6 0 0 1 6 6v5l2 4v1H1v-1l2-4V6a6 6 0 0 1 6-6zM6 17h6a3 3 0 0 1-6 0z" fill="#ff9e80" stroke="none" /></Ico></TrayButton>
            <TrayButton $width={60} aria-label="Copilot">
              <svg width="30" height="30" viewBox="0 0 30 30" aria-hidden="true">
                <defs>
                  <linearGradient id="cpa" x1="0" x2="0" y1="0" y2="1"><stop offset="0" stopColor="#2f6fe0" /><stop offset=".5" stopColor="#25c0d8" /><stop offset="1" stopColor="#d8d820" /></linearGradient>
                  <linearGradient id="cpb" x1="0" x2="0" y1="0" y2="1"><stop offset="0" stopColor="#a050f0" /><stop offset="1" stopColor="#ff7a60" /></linearGradient>
                </defs>
                <path d="M7 1h11c2 0 3 1 3.500 3l1 4h-5c-2 0-3 1-3.500 3l-2 7c-.5 1.500-1.500 2-3 2H4c-3 0-4-2-3.500-4L4 3.500C4.500 2 5.500 1 7 1z" fill="url(#cpa)" />
                <path d="M18 8h7c3 0 4 2 3.500 4l-3 9c-.5 2-2 3-4 3h-8c2 0 3-1 3.500-3z" fill="url(#cpb)" />
                <rect x="7" y="20" width="23" height="9" rx="2" fill="#ffc20e" />
                <text x="18.500" y="28" textAnchor="middle" fontSize="9" fontWeight="700" fontFamily="Open Sans, sans-serif" fill="#222">PRE</text>
              </svg>
            </TrayButton>
          </Tray>
        </Desktop>
      </Frame>
    </>
  );
}
